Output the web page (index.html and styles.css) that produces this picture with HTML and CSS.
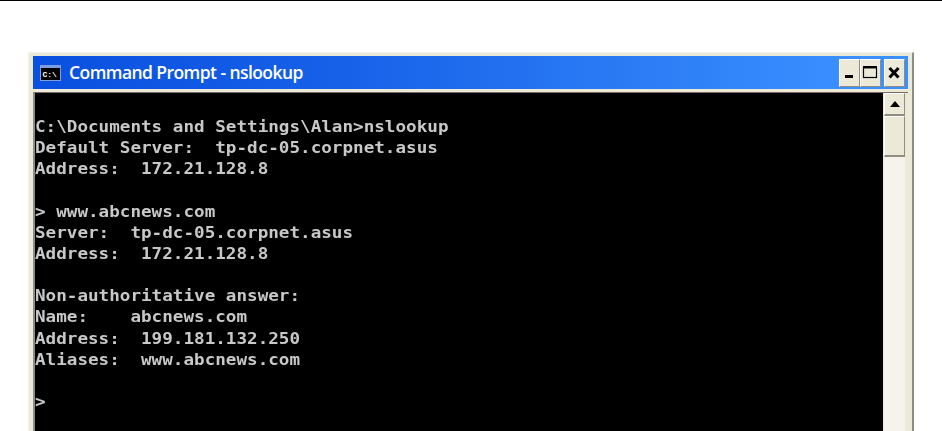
FILE: index.html
```html
<!DOCTYPE html>
<html lang="en">
<head>
<meta charset="utf-8">
<title>Command Prompt - nslookup</title>
<link rel="stylesheet" href="styles.css">
</head>
<body>
<div class="rule"></div>
<div class="window">
  <div class="titlebar">
    <svg class="app-icon" width="21" height="16" viewBox="0 0 21 16">
      <rect x="0" y="0" width="21" height="16" fill="#7f9fdc"/>
      <rect x="1" y="3" width="19" height="12" fill="#000"/>
      <text x="2.5" y="12" class="icon-text">C:\</text>
    </svg>
    <span class="title">Command Prompt - nslookup</span>
    <div class="controls">
      <div class="btn"><svg width="19" height="26" viewBox="0 0 19 26"><rect x="5" y="15" width="8" height="3" fill="#000"/></svg></div>
      <div class="btn"><svg width="19" height="26" viewBox="0 0 19 26"><rect x="2.5" y="7.5" width="13" height="10" fill="none" stroke="#000" stroke-width="1.2"/><rect x="2" y="6" width="14" height="2.4" fill="#000"/></svg></div>
      <div class="btn btn-close"><svg width="19" height="26" viewBox="0 0 19 26"><path d="M4.5 8l9 9.5M13.5 8l-9 9.5" stroke="#000" stroke-width="3" fill="none"/></svg></div>
    </div>
  </div>
  <div class="body">
    <div class="console">
      <pre class="console-text">
C:\Documents and Settings\Alan&gt;nslookup
Default Server:  tp-dc-05.corpnet.asus
Address:  172.21.128.8

&gt; www.abcnews.com
Server:  tp-dc-05.corpnet.asus
Address:  172.21.128.8

Non-authoritative answer:
Name:    abcnews.com
Address:  199.181.132.250
Aliases:  www.abcnews.com

&gt;</pre>
    </div>
    <div class="scrollbar">
      <div class="arrow"><svg width="10" height="6" viewBox="0 0 10 6"><path d="M5 0L10 6H0z" fill="#000"/></svg></div>
      <div class="thumb"></div>
    </div>
  </div>
</div>
</body>
</html>
```
FILE: styles.css
```css
html, body {
  margin: 0;
  height: 431px;
  overflow: hidden;
  background: #fff;
}
.rule {
  height: 1px;
  background: #000;
}
.window {
  margin: 51px 0 0 28px;
  width: 886px;
  height: 379px;
  overflow: hidden;
  box-sizing: border-box;
  background: #ece9d8;
  border-top: 1px solid #f4f2ea;
  border-left: 1px solid #f4f2ea;
  border-right: 2px solid #8f8c80;
  padding: 3px 4px 0 4px;
}
.titlebar {
  display: flex;
  align-items: center;
  height: 33px;
  background: linear-gradient(90deg, #0a50e0 0%, #1660e8 34%, #3b90ff 94%);
  padding: 0 3px 0 7px;
}
.app-icon {
  flex: none;
}
.icon-text {
  font: bold 8px "Liberation Mono", monospace;
  fill: #fff;
}
.title {
  margin-left: 8px;
  font: 600 17.5px/1 "Open Sans", "Liberation Sans", sans-serif;
  letter-spacing: -0.57px;
  color: #fff;
}
.controls {
  margin-left: auto;
  display: flex;
}
.btn {
  width: 19px;
  height: 26px;
  display: flex;
  align-items: center;
  justify-content: center;
  background: #ece9d8;
  border-top: 1px solid #fff;
  border-left: 1px solid #fff;
  border-right: 1px solid #8f8c80;
  border-bottom: 1px solid #8f8c80;
}
.btn-close {
  margin-left: 3px;
}
.body {
  display: flex;
  margin-top: 3px;
  height: 400px;
  border-top: 1px solid #716f64;
  border-left: 2px solid #8f8c80;
}
.console {
  flex: 1;
  background: #000;
  overflow: hidden;
}
.console-text {
  margin: 0;
  padding: 24px 0 0 0;
  color: #c8c8c8;
  font: bold 15px/21.15px "DejaVu Sans Mono", monospace;
  transform: scaleX(1.174);
  transform-origin: left top;
  filter: blur(0.3px);
}
.scrollbar {
  flex: none;
  width: 21px;
  margin-left: 1px;
  margin-right: 3px;
  display: flex;
  flex-direction: column;
  background: #f5f3ec;
}
.arrow, .thumb {
  box-sizing: border-box;
  background: #ece9d8;
  border-top: 1px solid #fff;
  border-left: 1px solid #fff;
  border-right: 1px solid #8f8c80;
  border-bottom: 2px solid #8f8c80;
  display: flex;
  align-items: center;
  justify-content: center;
}
.arrow {
  height: 23px;
}
.thumb {
  height: 41px;
}
```
